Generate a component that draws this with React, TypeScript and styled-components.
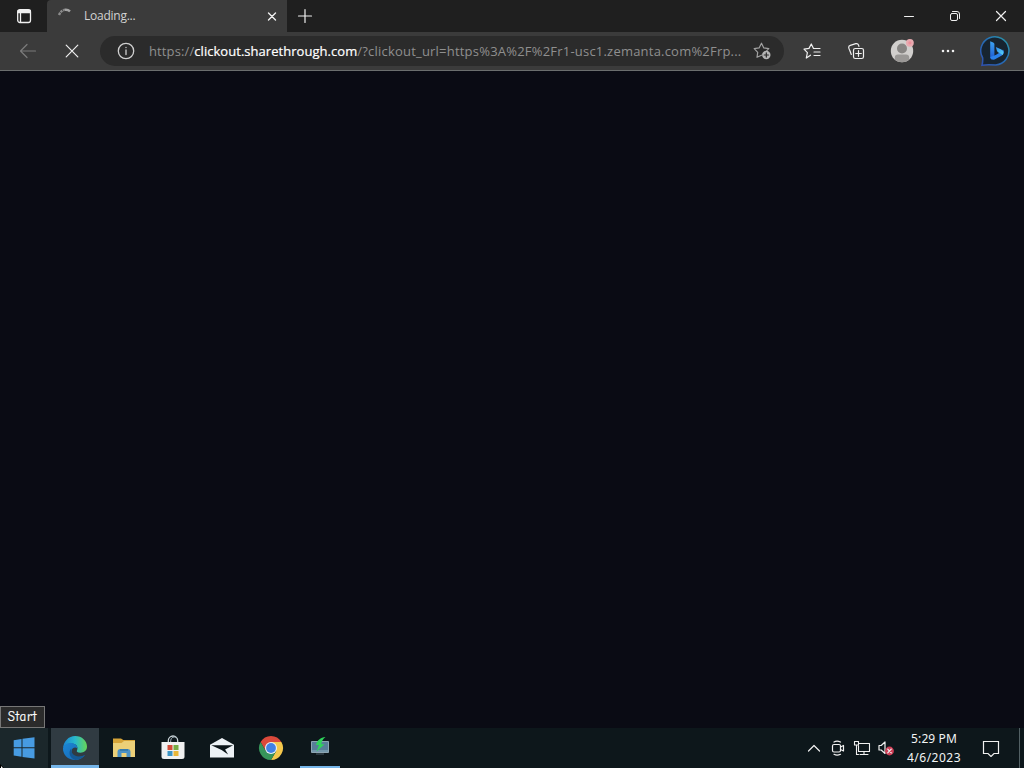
import React from 'react'
import styled, { createGlobalStyle, css } from 'styled-components'

const colors = {
  frame: '#1f1f1f',
  toolbar: '#3b3b3b',
  field: '#2b2b2b',
  page: '#0a0b14',
  taskbar: '#0d171b',
  accent: '#75b5e9',
}

const GlobalStyle = createGlobalStyle`
  * {
    box-sizing: border-box;
  }

  body {
    margin: 0;
    overflow: hidden;
    background: ${colors.page};
    font-family: 'Open Sans', 'Noto Sans', sans-serif;
  }

  svg {
    display: block;
    flex: none;
  }
`

const Desktop = styled.div`
  position: relative;
  display: flex;
  flex-direction: column;
  width: 1024px;
  height: 768px;
  background: ${colors.page};
`

const TitleBar = styled.header`
  display: flex;
  height: 32px;
  background: ${colors.frame};
`

const Slot = styled.div<{ $width: number }>`
  display: flex;
  flex: none;
  align-items: center;
  justify-content: center;
  width: ${({ $width }) => $width}px;
`

const Tab = styled.div`
  display: flex;
  align-items: center;
  width: 240px;
  padding: 0 9px 0 10px;
  border-radius: 4px 0 0 0;
  background: ${colors.toolbar};
`

const TabTitle = styled.span`
  flex: 1;
  margin-left: 11px;
  color: #d2d2d2;
  font-size: 12px;
  line-height: 32px;
  letter-spacing: -0.25px;
`

const WindowControls = styled.div`
  display: flex;
  margin-left: auto;
`

const Toolbar = styled.nav`
  display: flex;
  height: 39px;
  padding-left: 6px;
  border-bottom: 1px solid #6b6e6e;
  background: ${colors.toolbar};
`

const AddressBar = styled.div`
  display: flex;
  flex: none;
  align-items: center;
  width: 684px;
  height: 30px;
  margin: 4px 6px 0;
  padding: 0 12px 0 17px;
  border-radius: 15px;
  background: ${colors.field};
`

const Url = styled.div`
  flex: 1;
  margin-left: 14px;
  color: #8f8f8f;
  font-size: 13px;
  line-height: 28px;
  white-space: nowrap;
`

const UrlPart = styled.span<{ $spacing: number; $strong?: boolean }>`
  letter-spacing: ${({ $spacing }) => $spacing}px;

  ${({ $strong }) => $strong && css`
    color: #fff;
    -webkit-text-stroke: 0.2px #fff;
  `}
`

const Page = styled.main`
  display: flex;
  flex: 1;
  align-items: flex-end;
  background: ${colors.page};
`

const Tooltip = styled.div`
  width: 45px;
  height: 22px;
  border: 1px solid #777;
  background: #2b2b2b;
  color: #fff;
  font-family: 'Comic Sans MS', 'Comic Neue', 'Noto Sans', sans-serif;
  font-size: 13px;
  line-height: 20px;
  letter-spacing: 0.7px;
  text-align: center;
  -webkit-text-stroke: 0.2px #fff;
`

const Taskbar = styled.footer`
  display: flex;
  height: 40px;
  background: ${colors.taskbar};
`

const TaskButton = styled.div<{ $state?: 'hover' | 'active' }>`
  display: flex;
  align-items: center;
  justify-content: center;
  width: 48px;
  margin-right: 1px;

  ${({ $state }) => $state === 'hover' && css`
    margin-right: 3px;
    background: #1b272b;
  `}

  ${({ $state }) => $state === 'active' && css`
    padding-top: 2px;
    border-bottom: 3px solid ${colors.accent};
    background: #303b42;
  `}
`

const RunningApp = styled.div`
  display: flex;
  align-items: center;
  justify-content: center;
  width: 40px;
  margin-left: 4px;
  border-bottom: 2px solid ${colors.accent};
`

const Tray = styled.div`
  display: flex;
  margin-left: auto;
`

const Clock = styled.div`
  width: 58px;
  margin-left: 7px;
  padding-top: 1px;
  color: #f2f5f5;
  font-family: 'Noto Sans', sans-serif;
  font-size: 12px;
  line-height: 19px;
  text-align: center;
  white-space: nowrap;
`

const ClockLine = styled.div<{ $spacing: number }>`
  letter-spacing: ${({ $spacing }) => $spacing}px;
`

const ShowDesktop = styled.div`
  width: 5px;
  border-left: 1px solid #526064;
`

// The pointer rests on the very corner of the screen
const Pointer = styled.svg`
  position: absolute;
  bottom: 0;
  left: 0;
`

interface IconProps {
  size: number
  color?: string
  stroke?: number
  children: React.ReactNode
}

const Icon: React.FC<IconProps> = ({ size, color = '#f0f0f0', stroke = 1.2, children }) => (
  <svg
    width={size}
    height={size}
    viewBox={`0 0 ${size} ${size}`}
    fill='none'
    stroke={color}
    strokeWidth={stroke}
    strokeLinecap='round'
    strokeLinejoin='round'
  >
    {children}
  </svg>
)

const TabActionsIcon = () => (
  <Icon size={16} stroke={1.3}>
    <rect x='1.7' y='1.7' width='12.8' height='12.8' rx='2.2' />
    <path d='M2 2.5h12.3v2H2z' fill='#f0f0f0' />
    <path d='M4.5 5v9' />
  </Icon>
)

const SpinnerIcon = () => (
  <Icon size={16} color='#a4a4a4' stroke={2.4}>
    <path d='M2 7C3.200 4.200 4.900 2.600 7 2' stroke='#8c8c8c' strokeDasharray='2.400 .7' strokeLinecap='butt' />
    <path d='M7.300 1.900C9.300 1.500 11.500 2 13 3.400' strokeLinecap='butt' />
  </Icon>
)

const BingIcon = () => (
  <svg width='32' height='32' viewBox='0 0 32 32'>
    <defs>
      <linearGradient id='bingRing' x1='0' y1='1' x2='1' y2='0'>
        <stop offset='0' stopColor='#2f4fae' />
        <stop offset='0.55' stopColor='#256fb5' />
        <stop offset='1' stopColor='#2b9aa6' />
      </linearGradient>
      <linearGradient id='bingMark' x1='0' y1='0' x2='1' y2='1'>
        <stop offset='0' stopColor='#2f8df0' />
        <stop offset='1' stopColor='#5bd6f5' />
      </linearGradient>
      <linearGradient id='bingStem' x1='0' y1='0' x2='0' y2='1'>
        <stop offset='0' stopColor='#3ba4f4' />
        <stop offset='1' stopColor='#1d55cf' />
      </linearGradient>
    </defs>
    <path
      d='M2 30.300q.9-3 .7-7.300A14.100 14.100 0 1 1 15.800 29.900q-4-.2-7-.2-4 0-6.800.6Z'
      fill='#172430'
      stroke='url(#bingRing)'
      strokeWidth='1.500'
    />
    <path d='M10.200 6.300l3 1.100q1.200.5 1.200 1.700v12.500l-2.500 3.200q-1.700-.7-1.700-2.500z' fill='url(#bingStem)' />
    <path d='M10.300 22c.5 2.500 3 3.400 5.200 2.100l6.300-3.700c2.300-1.400 2.900-3.900 1.200-6-1.500 2-3.200 3.200-8.600 6.200z' fill='#2b82ea' />
    <path d='M15.800 11.900l4.500 2c3.200 1.400 4 4.200 2 6.200-.8-1.300-2-1.700-4-2.600q-.9-.4-1.300-1.400z' fill='url(#bingMark)' />
  </svg>
)

const AvatarIcon = () => (
  <svg width='26' height='26' viewBox='0 0 26 26'>
    <circle cx='13' cy='13' r='11.2' fill='#d1cfcd' />
    <path d='M5.8 21.7v-2.1q0-3.200 3.200-3.200h8q3.200 0 3.200 3.200v2.100a11.200 11.200 0 0 1-14.400 0z' fill='#9a9896' />
    <circle cx='13' cy='10.500' r='5' fill='#878583' />
    <circle cx='20.900' cy='4.800' r='3.900' fill='#e8aab0' />
    <circle cx='20.900' cy='4.800' r='1.600' fill='#ed8f9b' />
  </svg>
)

const WindowsIcon = () => (
  <svg width='22' height='24' viewBox='0 0 22 24' fill='#479be2'>
    <path d='M.7 4.200L8.500 3v8.300H.7zM9.500 2.800L21.500 1.300v10H9.500zM.7 12.300h7.800v8.500L.7 19.600zM9.500 12.300h12v10.200l-12-1.600z' />
  </svg>
)

const EdgeIcon = () => (
  <svg width='26' height='26' viewBox='0 0 26 26'>
    <defs>
      <linearGradient id='edgeTop' x1='0' y1='.5' x2='1' y2='.5'>
        <stop offset='0' stopColor='#1c83d1' />
        <stop offset='.5' stopColor='#28b8cd' />
        <stop offset='1' stopColor='#67d556' />
      </linearGradient>
      <linearGradient id='edgeLow' x1='0' y1='0' x2='1' y2='1'>
        <stop offset='0' stopColor='#1b86d5' />
        <stop offset='1' stopColor='#1765b1' />
      </linearGradient>
    </defs>
    <path d='M1 13.500C1.500 6.500 6.500 1 13.200 1 20 1 25 6 25 11.500c0 4-3 6.200-6.500 6.200-3.100 0-4.300-1.200-3.500-2.400 1.200-2.100.4-6.800-5.500-6.800C5 8.500 1.700 11 1 13.500z' fill='url(#edgeTop)' />
    <path d='M1 13C2.200 9.500 5.500 7.500 9.500 8c3.700.4 6 2.700 6 5.500-2.200-2-6-.6-6 3.200 0 5 8.400 7.300 13.700 3.100C20.800 23.400 17.200 25 13 25 6 25 .6 19.500 1 13z' fill='url(#edgeLow)' />
    <path d='M9.200 13.500c-3.300 3.700-1.500 9.600 4 11.400 4.200-.2 7.800-2 10-5.100-5 3-11.200 1.700-13-1.700-.8-1.600-.8-3.200-1-4.600z' fill='#155994' />
  </svg>
)

const FolderIcon = () => (
  <svg width='24' height='24' viewBox='0 0 24 24'>
    <path d='M1 2.500h8l2.300 1.500H23V20H1z' fill='#d6a438' />
    <path d='M1 7h8.500l2.500-2h11v16H1z' fill='#ecd078' />
    <path d='M5.500 21v-5q0-3 3-3h7q3 0 3 3v5h-4v-4h-5v4z' fill='#4b91c6' />
    <path d='M8 13h8v2H8z' fill='#377dae' />
  </svg>
)

const StoreIcon = () => (
  <svg width='26' height='26' viewBox='0 0 26 26'>
    <path d='M8.300 8V5.700a4.700 4.700 0 0 1 9.400 0V8' fill='none' stroke='#cbd5d9' strokeWidth='1.300' />
    <path d='M10.700 8V5.500a3.700 3.700 0 0 1 6.100-2.700' fill='none' stroke='#a7b6be' />
    <path d='M1.500 7h23v14.500q0 2.500-2.500 2.500H4q-2.500 0-2.500-2.500z' fill='#f0f1f1' />
    <path d='M7.500 10h5v5h-5z' fill='#d34c38' />
    <path d='M13.500 10h5v5h-5z' fill='#77ac45' />
    <path d='M7.500 16h5v5h-5z' fill='#3d95c4' />
    <path d='M13.500 16h5v5h-5z' fill='#e9b638' />
  </svg>
)

const MailIcon = () => (
  <svg width='26' height='22' viewBox='0 0 26 22'>
    <path d='M1 7.700L13 1l12 6.700V20.500H1z' fill='#edf2f6' />
    <path d='M2.300 8.200h21.800l-8 4.200 3 5-6.500-4.300z' fill='#0b1519' />
  </svg>
)

const ChromeIcon = () => (
  <svg width='26' height='26' viewBox='0 0 26 26'>
    <path d='M2.600 7A12 12 0 0 1 23.400 7H13l-5.200 9z' fill='#db493b' />
    <path d='M23.400 7A12 12 0 0 1 13 25l5.200-9L13 7z' fill='#f5c84c' />
    <path d='M13 25A12 12 0 0 1 2.600 7l5.200 9h10.400z' fill='#37955a' />
    <circle cx='13' cy='13' r='6' fill='#edf1f5' />
    <circle cx='13' cy='13' r='4.900' fill='#4281e5' />
  </svg>
)

const NetToolIcon = () => (
  <svg width='22' height='22' viewBox='0 0 22 22'>
    <path d='M2.500 5.500h17v11h-17z' fill='#577e98' stroke='#8da5b2' />
    <path d='M3 14h16v2H3z' fill='#7397ab' />
    <path d='M7 18h8' stroke='#4c5c66' />
    <path d='M16.500 1C11.500 1.300 8 4.500 7 9h3L7.500 15.500l8-7.300h-3.200C12.500 5.500 14 3 16.500 1z' fill='#2fd45c' />
  </svg>
)

const App = () => (
  <>
    <GlobalStyle />
    <Desktop>
      <TitleBar>
        <Slot $width={47}><TabActionsIcon /></Slot>
        <Tab>
          <SpinnerIcon />
          <TabTitle>Loading...</TabTitle>
          <Icon size={12} stroke={1.4}>
            <path d='M2.500 3l7 7M9.500 3l-7 7' />
          </Icon>
        </Tab>
        <Slot $width={35}>
          <Icon size={16}><path d='M8 1.500v13M1.500 8h13' /></Icon>
        </Slot>
        <WindowControls>
          <Slot $width={46}>
            <Icon size={12} stroke={1}><path d='M1.500 6.500h9' /></Icon>
          </Slot>
          <Slot $width={46}>
            <Icon size={12} stroke={1}>
              <rect x='1.500' y='3.500' width='7' height='7' rx='1.500' />
              <path d='M3.500 1.500h4.500q2.500 0 2.500 2.500v4.500' />
            </Icon>
          </Slot>
          <Slot $width={46}>
            <Icon size={12}><path d='M1.500 1.500l9 9M10.500 1.500l-9 9' /></Icon>
          </Slot>
        </WindowControls>
      </TitleBar>

      <Toolbar>
        <Slot $width={44}>
          <Icon size={18} color='#7b7b7b'>
            <path d='M16.500 9h-15M8 2.500L1.500 9 8 15.500' />
          </Icon>
        </Slot>
        <Slot $width={44}>
          <Icon size={14}><path d='M1.200 1.200l11.600 11.600M12.800 1.200L1.200 12.800' /></Icon>
        </Slot>
        <AddressBar>
          <Icon size={18} color='#d0d0d0' stroke={1.3}>
            <circle cx='9' cy='9' r='7.700' />
            <path d='M9 8v4.500M9 5.300v.2' />
          </Icon>
          <Url>
            <UrlPart $spacing={0.12}>https://</UrlPart>
            <UrlPart $spacing={0.04} $strong>clickout.sharethrough.com</UrlPart>
            <UrlPart $spacing={0.21}>/?clickout_url=https%3A%2F%2Fr1-usc1.zemanta.com%2Frp...</UrlPart>
          </Url>
          <Icon size={20} color='#a2a2a2'>
            <path d='M9.500 14.200L5 16.300l.7-5-3.500-3.600 4.900-.8L9.500 2.200l2.300 4.700 5 .8-2 2' />
            <circle cx='14.300' cy='14' r='4.200' fill='#b6b6b6' stroke='none' />
            <path d='M14.300 11.900v4.200M12.200 14h4.200' stroke='#2b2b2b' />
          </Icon>
        </AddressBar>
        <Slot $width={44}>
          <Icon size={18}>
            <path d='M7.500 13.200L3.300 16l1.100-5.400L1 7.100l5-.7L8.300 2l2.200 4.400M10.500 6.500H17M11 10h6M11 13.500h6' />
          </Icon>
        </Slot>
        <Slot $width={44}>
          <Icon size={18}>
            <rect x='6.500' y='6.500' width='10' height='10' rx='1.800' />
            <path d='M11.500 8.700v5.600M8.700 11.500h5.600M4.300 12.500L2.800 8.500q-.9-1.500-1.100-3Q1.500 3.800 3.300 3.300l5.500-1.600q2-.5 2.700 1.200l.4 1.400' />
          </Icon>
        </Slot>
        <Slot $width={48}><AvatarIcon /></Slot>
        <Slot $width={44}>
          <Icon size={16}>
            <path d='M3 8h.01M8 8h.01M13 8h.01' strokeWidth='2.600' />
          </Icon>
        </Slot>
        <Slot $width={52}><BingIcon /></Slot>
      </Toolbar>

      <Page><Tooltip>Start</Tooltip></Page>

      <Taskbar>
        <TaskButton $state='hover'><WindowsIcon /></TaskButton>
        <TaskButton $state='active'><EdgeIcon /></TaskButton>
        <TaskButton><FolderIcon /></TaskButton>
        <TaskButton><StoreIcon /></TaskButton>
        <TaskButton><MailIcon /></TaskButton>
        <TaskButton><ChromeIcon /></TaskButton>
        <RunningApp><NetToolIcon /></RunningApp>

        <Tray>
          <Slot $width={24}>
            <Icon size={14}><path d='M1.500 10L7 4.500l5.500 5.500' /></Icon>
          </Slot>
          <Slot $width={24}>
            <Icon size={16}>
              <rect x='2.500' y='4.500' width='8' height='7.500' rx='1.500' />
              <path d='M10.500 7l3-1.500V11l-3-1.500M4 2Q7 .3 10.500 2M4 14.300Q7 16 10.500 14.300' />
            </Icon>
          </Slot>
          <Slot $width={24}>
            <Icon size={18} stroke={1.1}>
              <path d='M6.500 4.500h10v8h-11V7M11 12.500v3M7 15.500h8M1.500 2.500h4V6h-4zM3.500 6v9.500h2' />
            </Icon>
          </Slot>
          <Slot $width={24}>
            <Icon size={18}>
              <path d='M2 6.500h2.200L8 3v11.500L4.200 11H2z' />
              <circle cx='12.500' cy='12' r='4.400' fill='#ce3e56' stroke='none' />
              <path d='M10.700 10.200l3.600 3.600M14.300 10.200l-3.600 3.600' />
            </Icon>
          </Slot>
          <Clock>
            <ClockLine $spacing={0.1}>5:29 PM</ClockLine>
            <ClockLine $spacing={0.5}>4/6/2023</ClockLine>
          </Clock>
          <Slot $width={56}>
            <Icon size={18}>
              <path d='M1.500 2.500h15v12H12l-3 3-3-3H1.500z' strokeLinejoin='miter' />
            </Icon>
          </Slot>
          <ShowDesktop />
        </Tray>
      </Taskbar>
      <Pointer width='4' height='4' viewBox='0 0 4 4'>
        <path d='M0 0l4 4H0z' fill='#000' />
        <path d='M1 2l2 2H1z' fill='#fff' />
      </Pointer>
    </Desktop>
  </>
)

export default App
